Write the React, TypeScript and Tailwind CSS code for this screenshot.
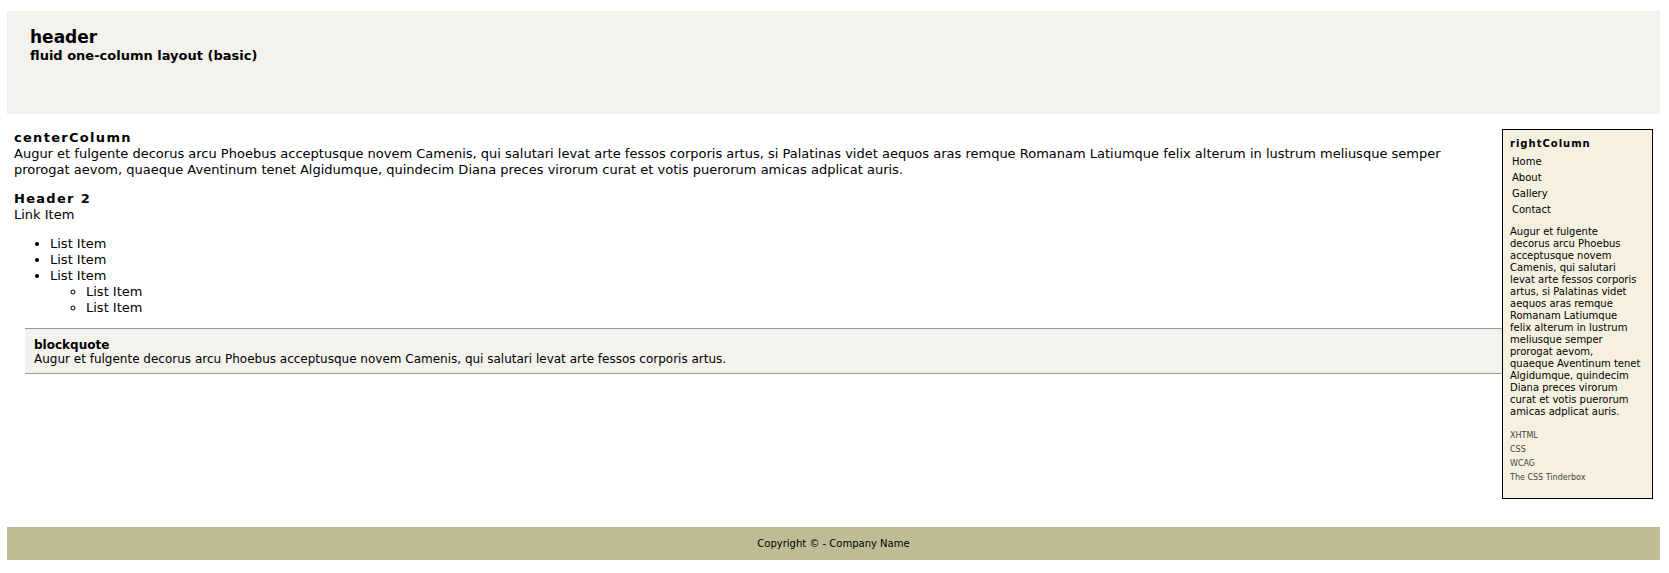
const navLinks = ["Home", "About", "Gallery", "Contact"];
const resourceLinks = ["XHTML", "CSS", "WCAG", "The CSS Tinderbox"];

export default function App() {
  return (
    <div className="mt-[11px] mr-[9px] ml-[7px] font-['Verdana','DejaVu_Sans',sans-serif] text-[13px] leading-4 text-black">
      <header className="min-h-[103px] border border-[#eeeeee] bg-[#f3f2ed] px-[22px] py-[15px]">
        <h1 className="mb-px text-[17px] leading-5 font-bold">header</h1>
        <h2 className="font-bold">fluid one-column layout (basic)</h2>
      </header>

      <div className="flex items-start px-[7px] pt-[15px] pb-7">
        <main className="min-w-0 flex-1 pt-px">
          <h2 className="font-bold tracking-widest">centerColumn</h2>
          <p className="mb-[13px] pr-12">
            Augur et fulgente decorus arcu Phoebus acceptusque novem Camenis, qui salutari levat arte
            fessos corporis artus, si Palatinas videt aequos aras remque Romanam Latiumque felix
            alterum in lustrum meliusque semper prorogat aevom, quaeque Aventinum tenet Algidumque,
            quindecim Diana preces virorum curat et votis puerorum amicas adplicat auris.
          </p>
          <h2 className="font-bold tracking-widest">Header 2</h2>
          <a href="#" className="block">
            Link Item
          </a>
          <ul className="mt-[13px] mb-3 list-disc pl-9">
            <li>List Item</li>
            <li>List Item</li>
            <li>
              List Item
              <ul className="list-[circle] pl-9">
                <li>List Item</li>
                <li>List Item</li>
              </ul>
            </li>
          </ul>
          <blockquote className="ml-[11px] border-y border-[#999999] bg-[#f3f2ed] px-[9px] pt-[9px] pb-[7px] text-[12px] leading-[14px]">
            <h3 className="font-bold">blockquote</h3>
            <p>
              Augur et fulgente decorus arcu Phoebus acceptusque novem Camenis, qui salutari levat
              arte fessos corporis artus.
            </p>
          </blockquote>
        </main>

        <aside className="w-[151px] shrink-0 border border-black bg-[#f6f0e0] px-[7px] pt-2 pb-[13px] text-[10px] leading-3">
          <h2 className="mb-1 font-bold tracking-widest">rightColumn</h2>
          <nav>
            <ul className="mb-2 pl-[2px] leading-4">
              {navLinks.map((label) => (
                <li key={label}>
                  <a href="#">{label}</a>
                </li>
              ))}
            </ul>
          </nav>
          <p className="mb-[11px] pr-[2px]">
            Augur et fulgente
            <br />
            decorus arcu Phoebus acceptusque novem Camenis, qui salutari levat arte fessos corporis
            artus, si Palatinas videt aequos aras remque Romanam Latiumque
            <br />
            felix alterum in lustrum meliusque semper prorogat aevom,
            <br />
            quaeque Aventinum tenet Algidumque, quindecim Diana preces virorum curat et votis
            puerorum amicas adplicat auris.
          </p>
          <ul className="text-[8px] leading-[14px] text-[#444444]">
            {resourceLinks.map((label) => (
              <li key={label}>
                <a href="#">{label}</a>
              </li>
            ))}
          </ul>
        </aside>
      </div>

      <footer className="bg-[#bebc92] py-[10px] text-center text-[10px] leading-[13px]">
        Copyright © - Company Name
      </footer>
    </div>
  );
}
